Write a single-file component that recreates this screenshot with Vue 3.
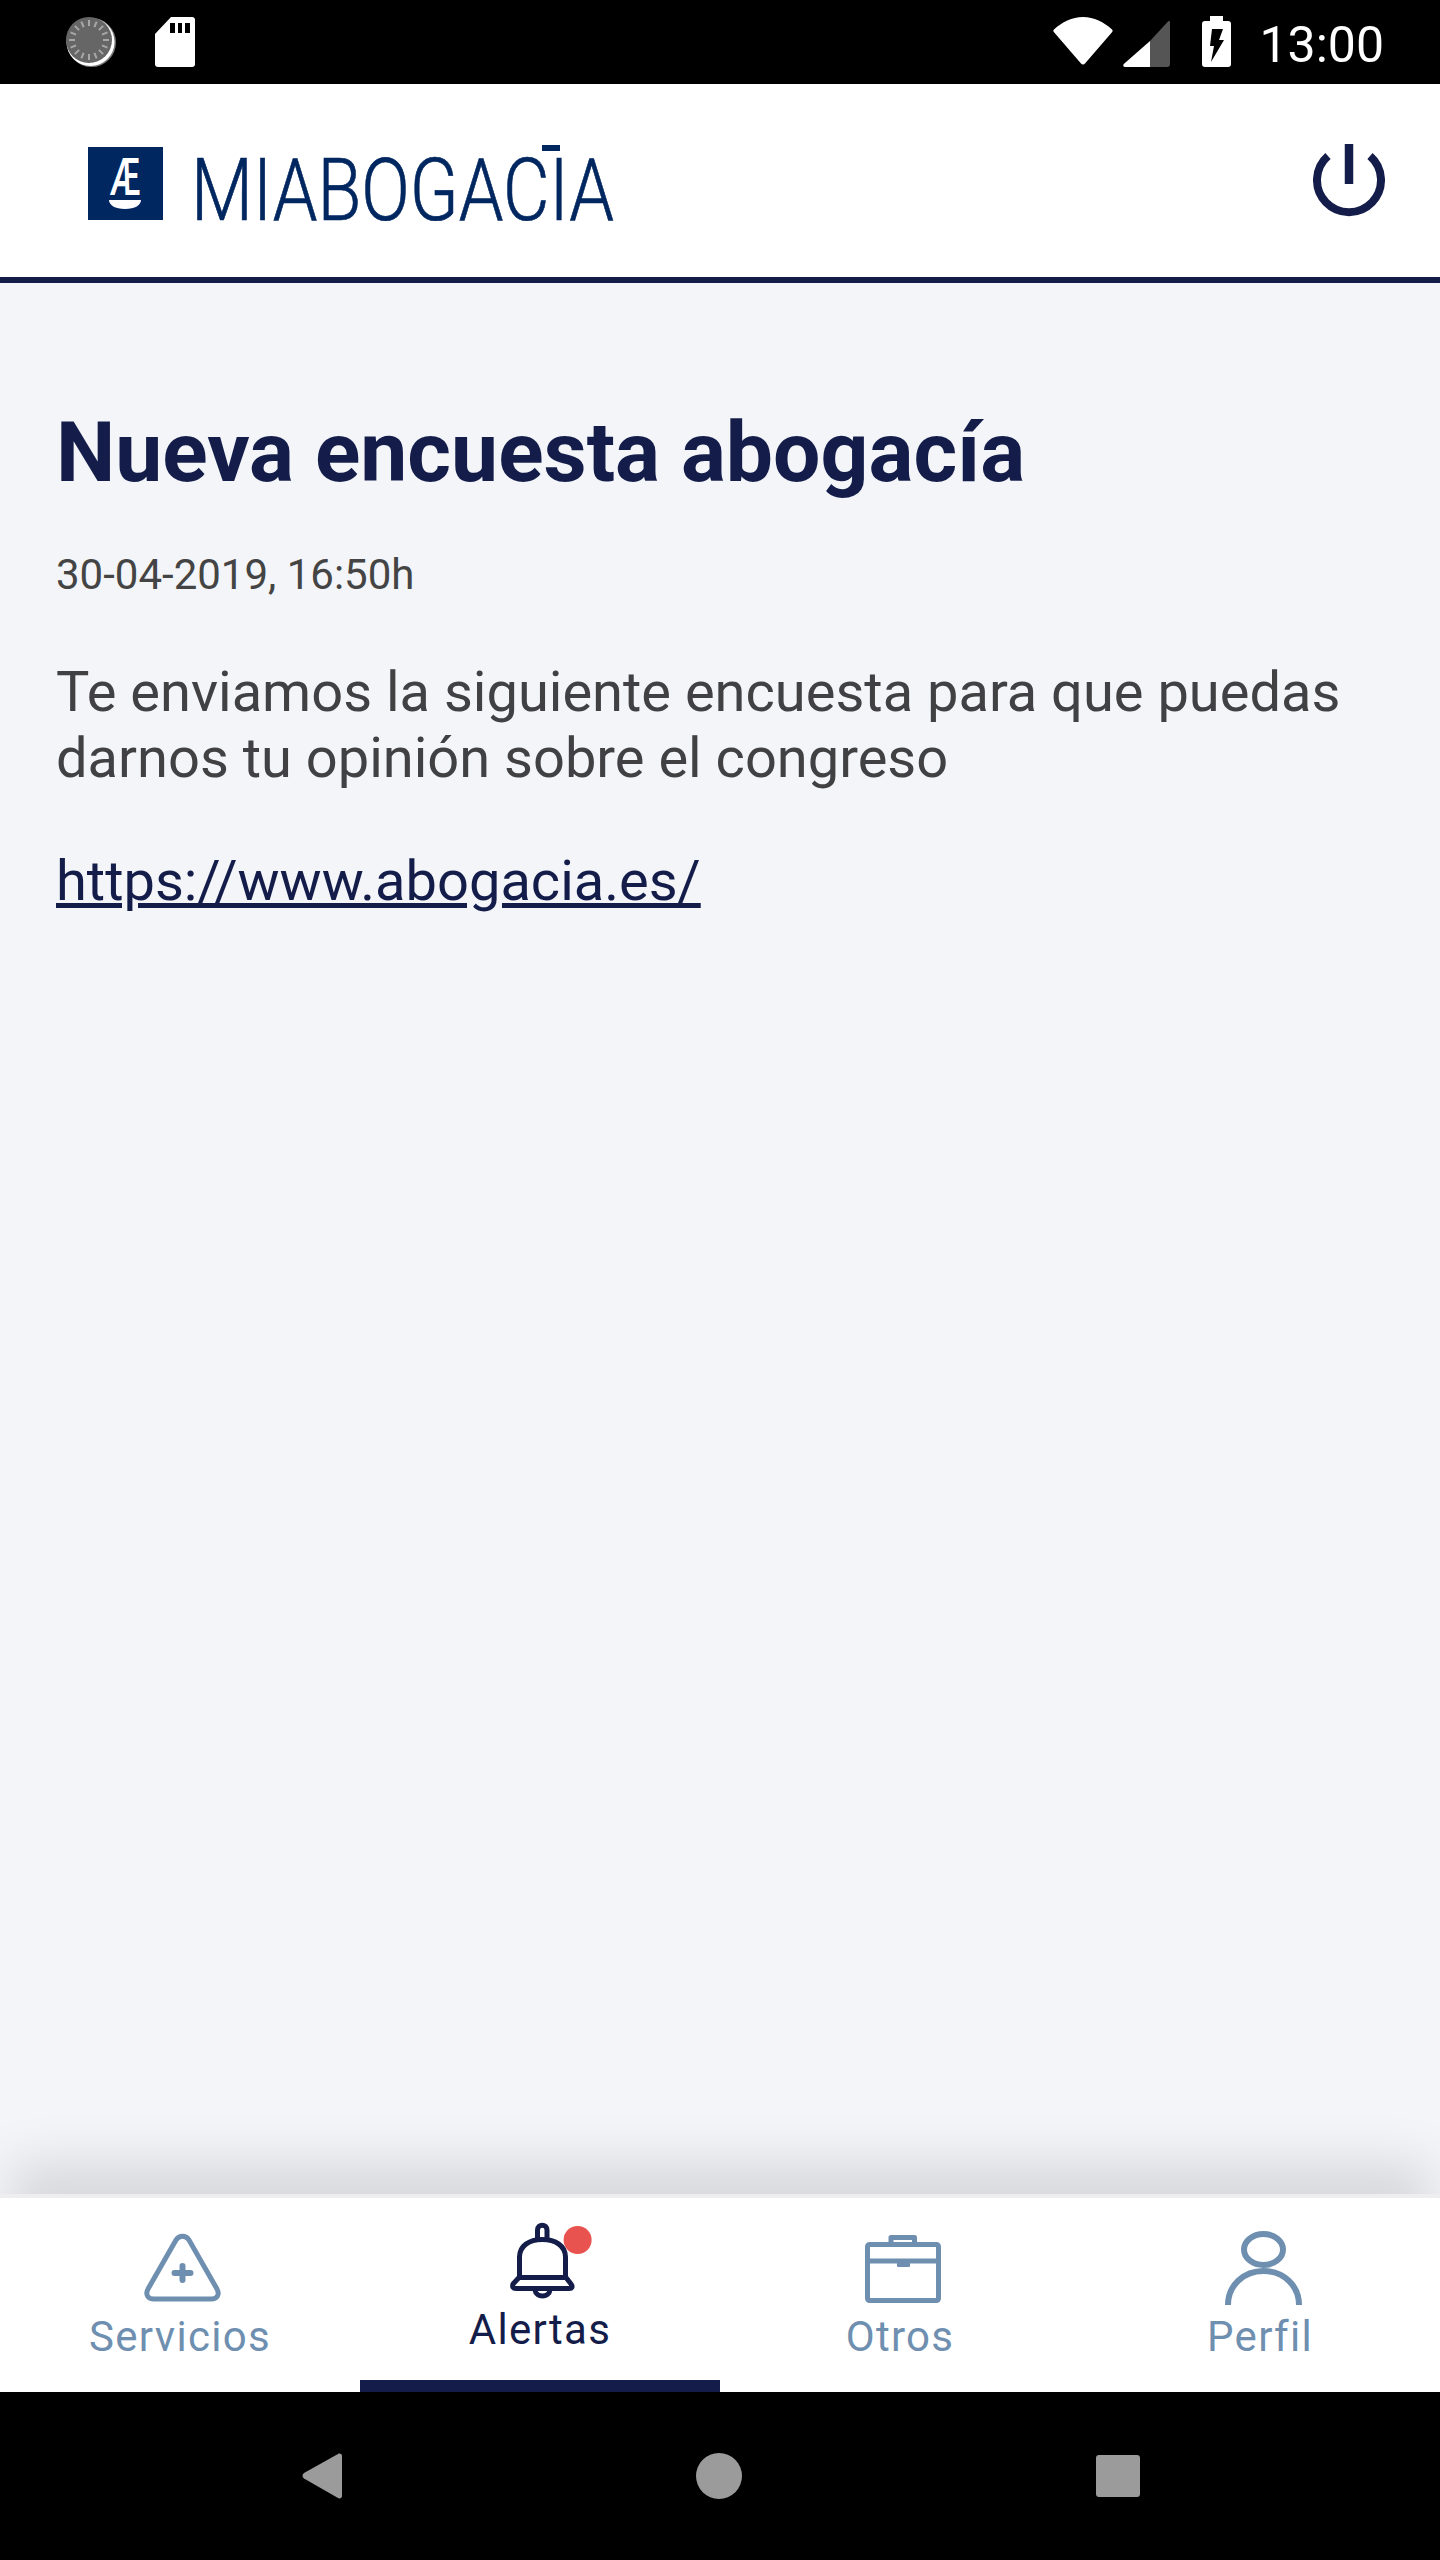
<template>
  <div class="screen">
    <div class="status-bar">
      <div class="status-left">
        <svg class="ic-sync" width="50" height="50" viewBox="0 0 50 50">
          <circle cx="25.5" cy="25.5" r="24.5" fill="#777" />
          <circle cx="24.5" cy="25" r="24" fill="#fff" />
          <circle cx="23" cy="23" r="23" fill="#666" />
          <g stroke="#a8a8a8" stroke-width="2">
            <line v-for="t in ticks" :key="t" x1="23" y1="3" x2="23" y2="9" :transform="`rotate(${t} 23 23)`" />
          </g>
        </svg>
        <svg width="40" height="50" viewBox="0 0 40 50">
          <path d="M16 0H37a3 3 0 0 1 3 3V47a3 3 0 0 1-3 3H3a3 3 0 0 1-3-3V17z" fill="#fff" />
          <path d="M15 6h5v10h-5zM23 6h4v10h-4zM30 6h5v10h-5z" fill="#000" />
        </svg>
      </div>
      <div class="status-right">
        <svg width="60" height="48" viewBox="0 0 60 48">
          <path d="M1 12.500C9 5 19 0 30 0s21 5 29 12.500c.8.8.8 1.600.2 2.400L32 46.500c-1 1.400-3 1.400-4 0L.8 14.900c-.6-.8-.6-1.600.2-2.400z" fill="#fff" />
        </svg>
        <svg class="ic-signal" width="47" height="47" viewBox="0 0 47 47">
          <path d="M27 47V21L45 1.500c.8-.8 2-.3 2 .8V44a3 3 0 0 1-3 3z" fill="#555" />
          <path d="M27 21V47H2c-1.600 0-2.400-1.800-1.200-3z" fill="#fff" />
        </svg>
        <svg class="ic-batt" width="29" height="51" viewBox="0 0 29 51">
          <path d="M8 0H21V5H26a3 3 0 0 1 3 3V48a3 3 0 0 1-3 3H3a3 3 0 0 1-3-3V8a3 3 0 0 1 3-3H8z" fill="#fff" />
          <path d="M10 13H21L17 24H22L9 46L12 30H8z" fill="#000" />
        </svg>
        <span class="clock">13:00</span>
      </div>
    </div>

    <header class="app-header">
      <svg class="logo" width="800" height="80" viewBox="0 0 800 80">
        <rect x="0" y="6" width="75" height="73" fill="#002760" />
        <text transform="translate(22 54) scale(.62 1)" class="logo-mark">Æ</text>
        <path d="M21 59H53C53 64 47 68 37 68S21 64 21 59z" fill="#fff" />
        <text transform="translate(103 79) scale(.823 1)" class="logo-word">MIABOGACIA</text>
        <rect x="454" y="4" width="18" height="6" fill="#002760" />
      </svg>
      <svg width="72" height="74" viewBox="0 0 72 74" fill="none" stroke="#141d4a" stroke-width="8">
        <path d="M15 12A32 32 0 1 0 57 12" />
        <path d="M36 0V40" stroke-width="8.500" />
      </svg>
    </header>

    <main class="content">
      <h1>Nueva encuesta abogacía</h1>
      <p class="date">30-04-2019, 16:50h</p>
      <p class="body">Te enviamos la siguiente encuesta para que puedas darnos tu opinión sobre el congreso</p>
      <a class="link">https://www.abogacia.es/</a>
    </main>

    <nav class="tabs">
      <div class="tab">
        <svg class="shift-s" width="80" height="80" viewBox="0 0 80 80" fill="none" stroke="#6f8fb0" stroke-width="5" stroke-linejoin="round">
          <path d="M34 12C37 7 44 7 47 12L75 61C78 67 75 71 69 71H12C6 71 3 67 6 61z" />
          <path d="M40.500 38V52M32.500 45H48.500" stroke-width="6" stroke-linecap="round" />
        </svg>
        <span class="tab-label">Servicios</span>
      </div>
      <div class="tab active">
        <svg class="shift-a" width="96" height="80" viewBox="0 0 96 80" fill="none" stroke="#141d4a" stroke-width="5" stroke-linejoin="round">
          <path d="M39.500 17V9C39.500 2.500 49 2.500 49 9V17" />
          <path d="M21.500 56V36C21.500 25 31 18.500 44.300 18.500S67.500 25 67.500 36V56" />
          <path d="M21 56.500H68L73 63C75 66 74 67.500 71 67.500H18C15 67.500 14 66 15 63z" />
          <path d="M37 69C38 77 51 77 52 69" />
          <circle class="badge" cx="79.600" cy="19" r="14" />
        </svg>
        <span class="tab-label">Alertas</span>
        <div class="tab-marker"></div>
      </div>
      <div class="tab">
        <svg class="shift-o" width="80" height="80" viewBox="0 0 80 80" fill="none" stroke="#6f8fb0" stroke-width="5" stroke-linejoin="round">
          <rect x="4.500" y="16.500" width="71" height="56" rx="2" />
          <path d="M28 15V9.500H51.500V15" />
          <path d="M4 33H76" />
          <path d="M35 35H46V38H35z" fill="#6f8fb0" stroke-width="2" />
        </svg>
        <span class="tab-label">Otros</span>
      </div>
      <div class="tab">
        <svg class="shift-p" width="80" height="80" viewBox="0 0 80 80" fill="none" stroke="#6f8fb0" stroke-width="6">
          <ellipse cx="41.500" cy="21.500" rx="19.500" ry="15.500" />
          <path d="M6 77C6 57 22 43 41.500 43S77 57 77 77" />
        </svg>
        <span class="tab-label">Perfil</span>
      </div>
    </nav>

    <div class="nav-bar">
      <svg width="40" height="46" viewBox="0 0 40 46"><path d="M36 1L2 20c-2 1.500-2 4 0 5.500L36 45c2 1 4 0 4-2V3c0-2-2-3-4-2z" fill="#9b9b9b" /></svg>
      <svg width="46" height="46" viewBox="0 0 46 46"><circle cx="23" cy="23" r="23" fill="#9b9b9b" /></svg>
      <svg width="44" height="42" viewBox="0 0 44 42"><rect width="44" height="42" rx="3" fill="#9b9b9b" /></svg>
    </div>
  </div>
</template>

<script setup>
const ticks = Array.from({ length: 16 }, (_, i) => i * 22.5)
</script>

<style>
html, body { margin: 0; background: #000; }
</style>

<style scoped>
.screen {
  width: 1440px;
  height: 2560px;
  display: flex;
  flex-direction: column;
  font-family: Roboto, sans-serif;
  background: #f3f5f9;
}

/* status bar */
.status-bar {
  height: 84px;
  background: #000;
  display: flex;
  justify-content: space-between;
  align-items: flex-start;
  padding: 17px 56px 0 66px;
  box-sizing: border-box;
}
.status-left { display: flex; gap: 39px; }
.status-right { display: flex; align-items: flex-start; }
.ic-signal { margin: 3px 0 0 10px; }
.ic-batt { margin: -1px 0 0 32px; }
.clock {
  margin: 0 0 0 28px;
  font-size: 50px;
  line-height: 56px;
  color: #fff;
}

/* header */
.app-header {
  height: 199px;
  box-sizing: border-box;
  background: #fff;
  border-bottom: 6px solid #141d4a;
  display: flex;
  justify-content: space-between;
  align-items: center;
  padding: 0 55px 0 88px;
}

/* message */
.content {
  flex: 1;
  padding: 122px 56px 0;
}
h1 {
  margin: 0;
  font-size: 84px;
  line-height: 96px;
  font-weight: 700;
  color: #141d4a;
}
.date {
  margin: 49px 0 0;
  font-size: 42px;
  line-height: 50px;
  color: #444;
}
.body {
  margin: 59px 0 0;
  font-size: 56px;
  line-height: 66px;
  color: #414143;
}
.link {
  display: block;
  margin-top: 57px;
  font-size: 56px;
  line-height: 66px;
  color: #141d4a;
  text-decoration: underline;
}

/* tabs */
.tabs {
  height: 198px;
  box-sizing: border-box;
  background: #fff;
  border-top: 4px solid #eeeeee;
  box-shadow: 0 -40px 50px -10px rgba(0, 0, 0, 0.12);
  display: grid;
  grid-template-columns: repeat(4, 360px);
  position: relative;
}
.tab {
  display: flex;
  flex-direction: column;
  align-items: center;
  padding-top: 30px;
}
.tab.active { padding-top: 23px; }
.tab-label {
  margin-top: 5px;
  font-size: 42px;
  line-height: 48px;
  letter-spacing: 1.3px;
  color: #6f8fb0;
}
.active .tab-label { color: #141d4a; }
.tab-marker {
  margin-top: auto;
  align-self: stretch;
  height: 12px;
  background: #141d4a;
}
.badge { fill: #e8524f; stroke: none; }
.shift-s { margin-left: 3px; }
.shift-a { margin-left: 12px; }
.shift-o { margin-left: 6px; }
.shift-p { margin-left: 4px; }

.logo-word {
  font-family: Roboto, sans-serif;
  font-weight: 300;
  font-size: 87px;
  fill: #002760;
  stroke: #002760;
  stroke-width: 0.7px;
}
.logo-mark {
  font-family: Roboto, sans-serif;
  font-weight: 500;
  font-size: 52px;
  fill: #fff;
}

/* android nav */
.nav-bar {
  height: 168px;
  background: #000;
  display: grid;
  grid-template-columns: 302px 40px 354px 46px 354px 44px;
  align-content: start;
  padding-top: 61px;
  box-sizing: border-box;
}
.nav-bar svg:nth-child(1) { grid-column: 2; }
.nav-bar svg:nth-child(2) { grid-column: 4; }
.nav-bar svg:nth-child(3) { grid-column: 6; margin-top: 2px; }
</style>
